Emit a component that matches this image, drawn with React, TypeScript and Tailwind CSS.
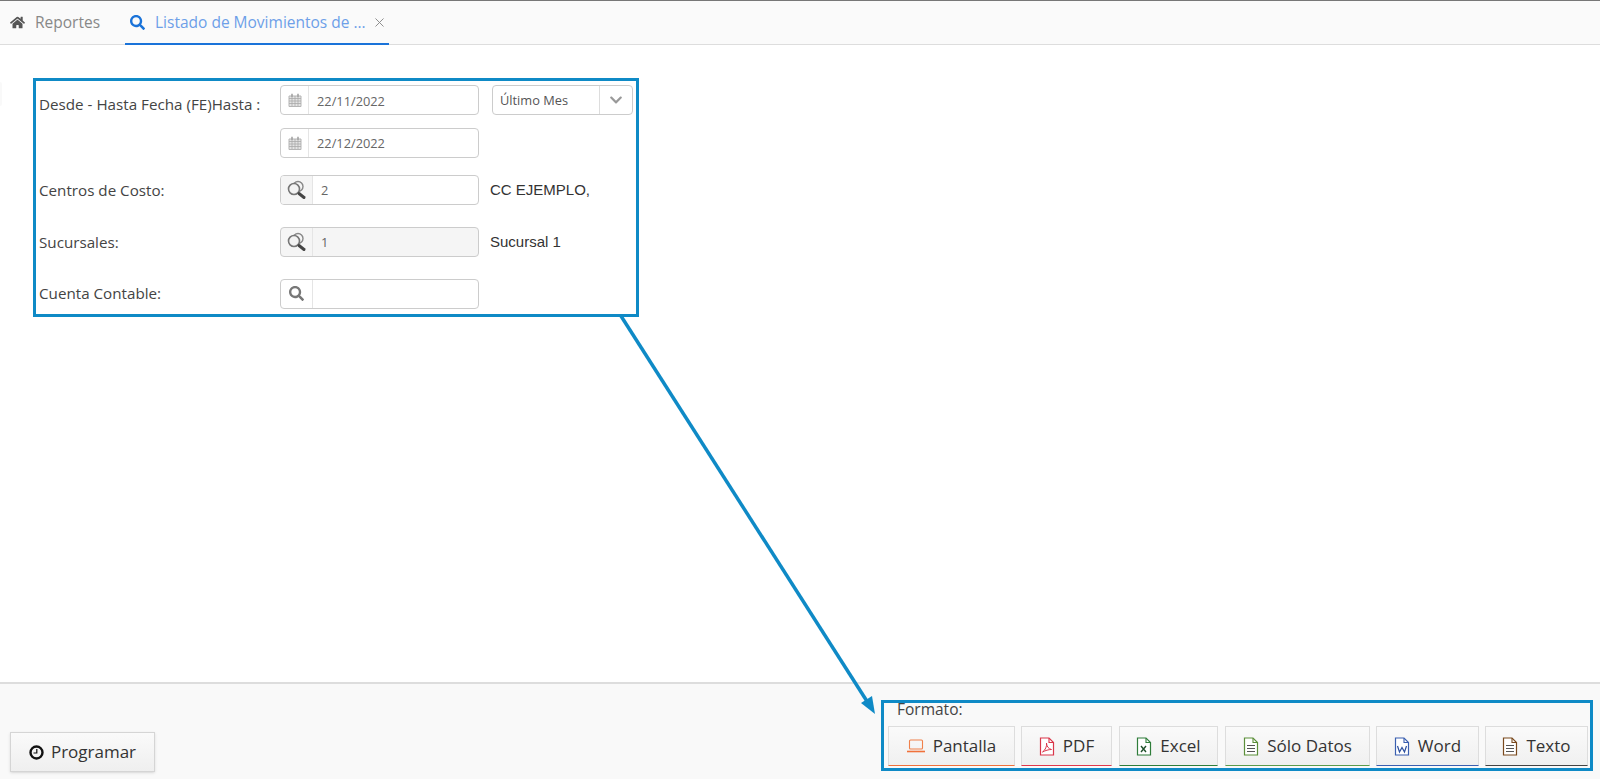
import React from 'react';
import { X } from 'lucide-react';
import { FaHome, FaSearch, FaChevronDown } from 'react-icons/fa';

const FileIcon: React.FC<{ color: string; mark?: string; lines?: boolean; lineColor?: string }> = ({ color, mark, lines, lineColor }) => (
  <svg width="16" height="19" viewBox="0 0 16 19" fill="none" className="shrink-0">
    <path d="M1.5 1h8.5l4.5 4.5V18h-13z" fill="#fff" stroke={color} strokeWidth="1.2" />
    <path d="M10 1v4.5h4.5" stroke={color} strokeWidth="1.1" />
    {lines && <path d="M4 8.5h8M4 11.5h8M4 14.5h8" stroke={lineColor ?? '#555'} strokeWidth="1" />}
    {mark === 'pdf' && <path d="M3.5 15c3-2 4.5-6 4-9 0 3 2 6 5 6.5-3 0-6 1-9 2.500z" stroke={color} strokeWidth="1" />}
    {mark === 'x' && <path d="M5 9l5 6M10 9l-5 6" stroke="#1f4f2a" strokeWidth="1.4" />}
    {mark === 'w' && <path d="M3.500 9l2 6 2.500-4.500 2.500 4.500 2-6" stroke="#2b4f9e" strokeWidth="1.2" />}
  </svg>
);

// double magnifier used by the lookup fields
const LookupIcon: React.FC = () => (
  <svg width="20" height="20" viewBox="0 0 20 20" fill="none">
    <circle cx="11" cy="6.500" r="5" stroke="#888" strokeWidth="1.400" />
    <circle cx="7" cy="9" r="5.500" fill="#f3f3f3" stroke="#777" strokeWidth="1.600" />
    <path d="M12 13.500l5 4" stroke="#444" strokeWidth="3" strokeLinecap="round" />
  </svg>
);

const CalendarIcon: React.FC = () => (
  <svg width="14" height="14" viewBox="0 0 14 14" fill="none">
    <path d="M1 3h12v10.500H1z" fill="#e4e4e4" stroke="#b5b5b5" />
    <path d="M1 5.500h12M1 8h12M1 10.500h12M4 3v10M7 3v10M10 3v10" stroke="#aaa" strokeWidth="0.800" />
    <path d="M4 .8v3M10 .8v3" stroke="#999" strokeWidth="1.400" />
  </svg>
);

const LaptopIcon: React.FC = () => (
  <svg width="18" height="14" viewBox="0 0 18 14" fill="none" className="shrink-0">
    <rect x="2.500" y="1" width="13" height="9" rx="1" stroke="#f0804a" strokeWidth="1.100" />
    <path d="M0 12.500h18" stroke="#f0713a" strokeWidth="1.600" />
  </svg>
);

const ClockIcon: React.FC = () => (
  <svg width="15" height="15" viewBox="0 0 15 15" fill="none" className="shrink-0">
    <circle cx="7.500" cy="7.500" r="6" stroke="#111" strokeWidth="2.400" />
    <path d="M7.800 4v4H4.500" stroke="#111" strokeWidth="1.200" />
  </svg>
);

const FieldBox: React.FC<{ icon: React.ReactNode; value?: string; addonWidth: string; disabled?: boolean; addonBg?: string }> = ({ icon, value, addonWidth, disabled, addonBg }) => (
  <div className={`flex h-[30px] w-[199px] shrink-0 overflow-hidden rounded-[4px] border border-[#ccc] ${disabled ? 'bg-[#f5f5f5]' : 'bg-white'}`}>
    <div className={`flex items-center justify-center border-r border-[#e5e5e5] ${addonWidth} ${addonBg ?? ''}`}>{icon}</div>
    <div className="flex items-center pl-2 pt-[2px] text-[12.800px] text-[#666]">{value}</div>
  </div>
);

const FormRow: React.FC<{ label?: string; labelPad: string; className?: string; children: React.ReactNode }> = ({ label, labelPad, className, children }) => (
  <div className={`flex items-center ${className ?? ''}`}>
    <div className={`w-[244px] shrink-0 whitespace-nowrap pl-[3px] text-[15.200px] text-[#444] ${labelPad}`}>{label}</div>
    {children}
  </div>
);

const ExportButton: React.FC<{ width: string; border: string; icon: React.ReactNode; label: string }> = ({ width, border, icon, label }) => (
  <button className={`flex h-10 items-center justify-center gap-2 border border-[#ddd] bg-linear-to-b from-[#fafafa] to-[#f0f0f0] text-[17px] text-[#333] ${width} ${border}`}>
    {icon}
    {label}
  </button>
);

const App: React.FC = () => {
  return (
    <div className="relative flex h-[779px] flex-col overflow-hidden bg-white font-['Open_Sans',sans-serif]">
      {/* Tabs */}
      <div className="flex h-[45px] items-end border-t border-b border-t-[#777] border-b-[#ddd] bg-[#fafafa] pl-[10px]">
        <div className="flex h-[43px] items-center gap-[10px] text-[15.500px] text-[#888]">
          <FaHome size={15} className="text-[#555]" />
          <span>Reportes</span>
        </div>
        <div className="ml-[25px] -mb-px flex h-[43px] w-[264px] items-center border-b-2 border-[#1a73d9] pl-[5px] text-[15.500px] text-[#6d9fe8]">
          <FaSearch size={15} className="text-[#1a73d9]" />
          <span className="ml-[10px] whitespace-nowrap">Listado de Movimientos de ...</span>
          <X size={15} className="ml-[6px] shrink-0 text-[#888]" strokeWidth={1.500} />
        </div>
      </div>

      {/* Edge of a collapsed side handle */}
      <div className="absolute left-0 top-[82px] h-[24px] w-[2px] rounded-r-full bg-[#f9f9f9]" />

      <main className="flex-1 pl-[33px] pt-[33px]">
        {/* Annotated filter block */}
        <div className="h-[239px] w-[606px] border-[3px] border-[#0f8ac6] pt-1">
          <FormRow label="Desde - Hasta Fecha (FE)Hasta :" labelPad="pt-2">
            <FieldBox addonWidth="w-[28px]" value="22/11/2022" icon={<CalendarIcon />} />
            <div className="ml-[13px] flex h-[30px] w-[141px] shrink-0 rounded-[4px] border border-[#ccc] bg-white text-[12.800px] text-[#555]">
              <div className="flex flex-1 items-center whitespace-nowrap border-r border-[#ddd] pl-[7px]">Último Mes</div>
              <div className="flex w-[32px] items-center justify-center">
                <FaChevronDown size={14} className="text-[#999]" />
              </div>
            </div>
          </FormRow>
          <div className="mt-[12px] pl-[244px]">
            <FieldBox addonWidth="w-[28px]" value="22/12/2022" icon={<CalendarIcon />} />
          </div>
          <FormRow label="Centros de Costo:" labelPad="pt-[2px]" className="mt-[17px]">
            <FieldBox addonWidth="w-[32px]" addonBg="bg-[#f5f5f5]" value="2" icon={<LookupIcon />} />
            <span className="ml-[11px] font-['Liberation_Sans',sans-serif] text-[15px] text-[#333]">CC EJEMPLO,</span>
          </FormRow>
          <FormRow label="Sucursales:" labelPad="pt-[2px]" className="mt-[22px]">
            <FieldBox addonWidth="w-[32px]" disabled value="1" icon={<LookupIcon />} />
            <span className="ml-[11px] font-['Liberation_Sans',sans-serif] text-[15px] text-[#333]">Sucursal 1</span>
          </FormRow>
          <FormRow label="Cuenta Contable:" labelPad="pt-0" className="mt-[22px]">
            <FieldBox addonWidth="w-[32px]" icon={<FaSearch size={15} className="text-[#777]" />} />
          </FormRow>
        </div>
      </main>

      {/* Footer actions */}
      <footer className="flex h-[97px] items-start justify-between border-t-2 border-[#ddd] bg-[#f9f9f9]">
        <button className="ml-[10px] mt-[48px] flex h-10 w-[145px] items-center justify-center gap-[7px] border border-[#d5d5d5] bg-linear-to-b from-[#fafafa] to-[#efefef] text-[17px] text-[#333] shadow-sm">
          <ClockIcon />
          Programar
        </button>
        <div className="mr-[7px] mt-[16px] flex h-[71px] w-[712px] flex-col border-[3px] border-[#0f8ac6] pl-[4px]">
          <div className="ml-[9px] h-[23px] text-[15.500px] leading-[12px] text-[#444]">Formato:</div>
          <div className="flex">
            <ExportButton width="w-[127px]" border="border-b-[#f0713a]" label="Pantalla" icon={<LaptopIcon />} />
            <ExportButton width="w-[91px] ml-[6px]" border="border-b-[#e0384a]" label="PDF" icon={<FileIcon color="#d9364a" mark="pdf" />} />
            <ExportButton width="w-[99px] ml-[7px]" border="border-b-[#2f7d3a]" label="Excel" icon={<FileIcon color="#2f7d3a" mark="x" />} />
            <ExportButton width="w-[145px] ml-[7px]" border="border-b-[#5c9a4a]" label="Sólo Datos" icon={<FileIcon color="#5c8f3a" lines />} />
            <ExportButton width="w-[103px] ml-[6px]" border="border-b-[#3a5fb0]" label="Word" icon={<FileIcon color="#3a5fb0" mark="w" />} />
            <ExportButton width="w-[103px] ml-[6px]" border="border-b-[#444]" label="Texto" icon={<FileIcon color="#7a4a1e" lines />} />
          </div>
        </div>
      </footer>

      {/* Annotation arrow between the two blocks */}
      <svg className="pointer-events-none absolute left-0 top-0" width="1600" height="779" fill="none">
        <path d="M621 316L870 706" stroke="#0f8ac6" strokeWidth="3.500" />
        <path d="M875 714L861 703L872 696z" fill="#0f8ac6" />
      </svg>
    </div>
  );
};

export default App;
